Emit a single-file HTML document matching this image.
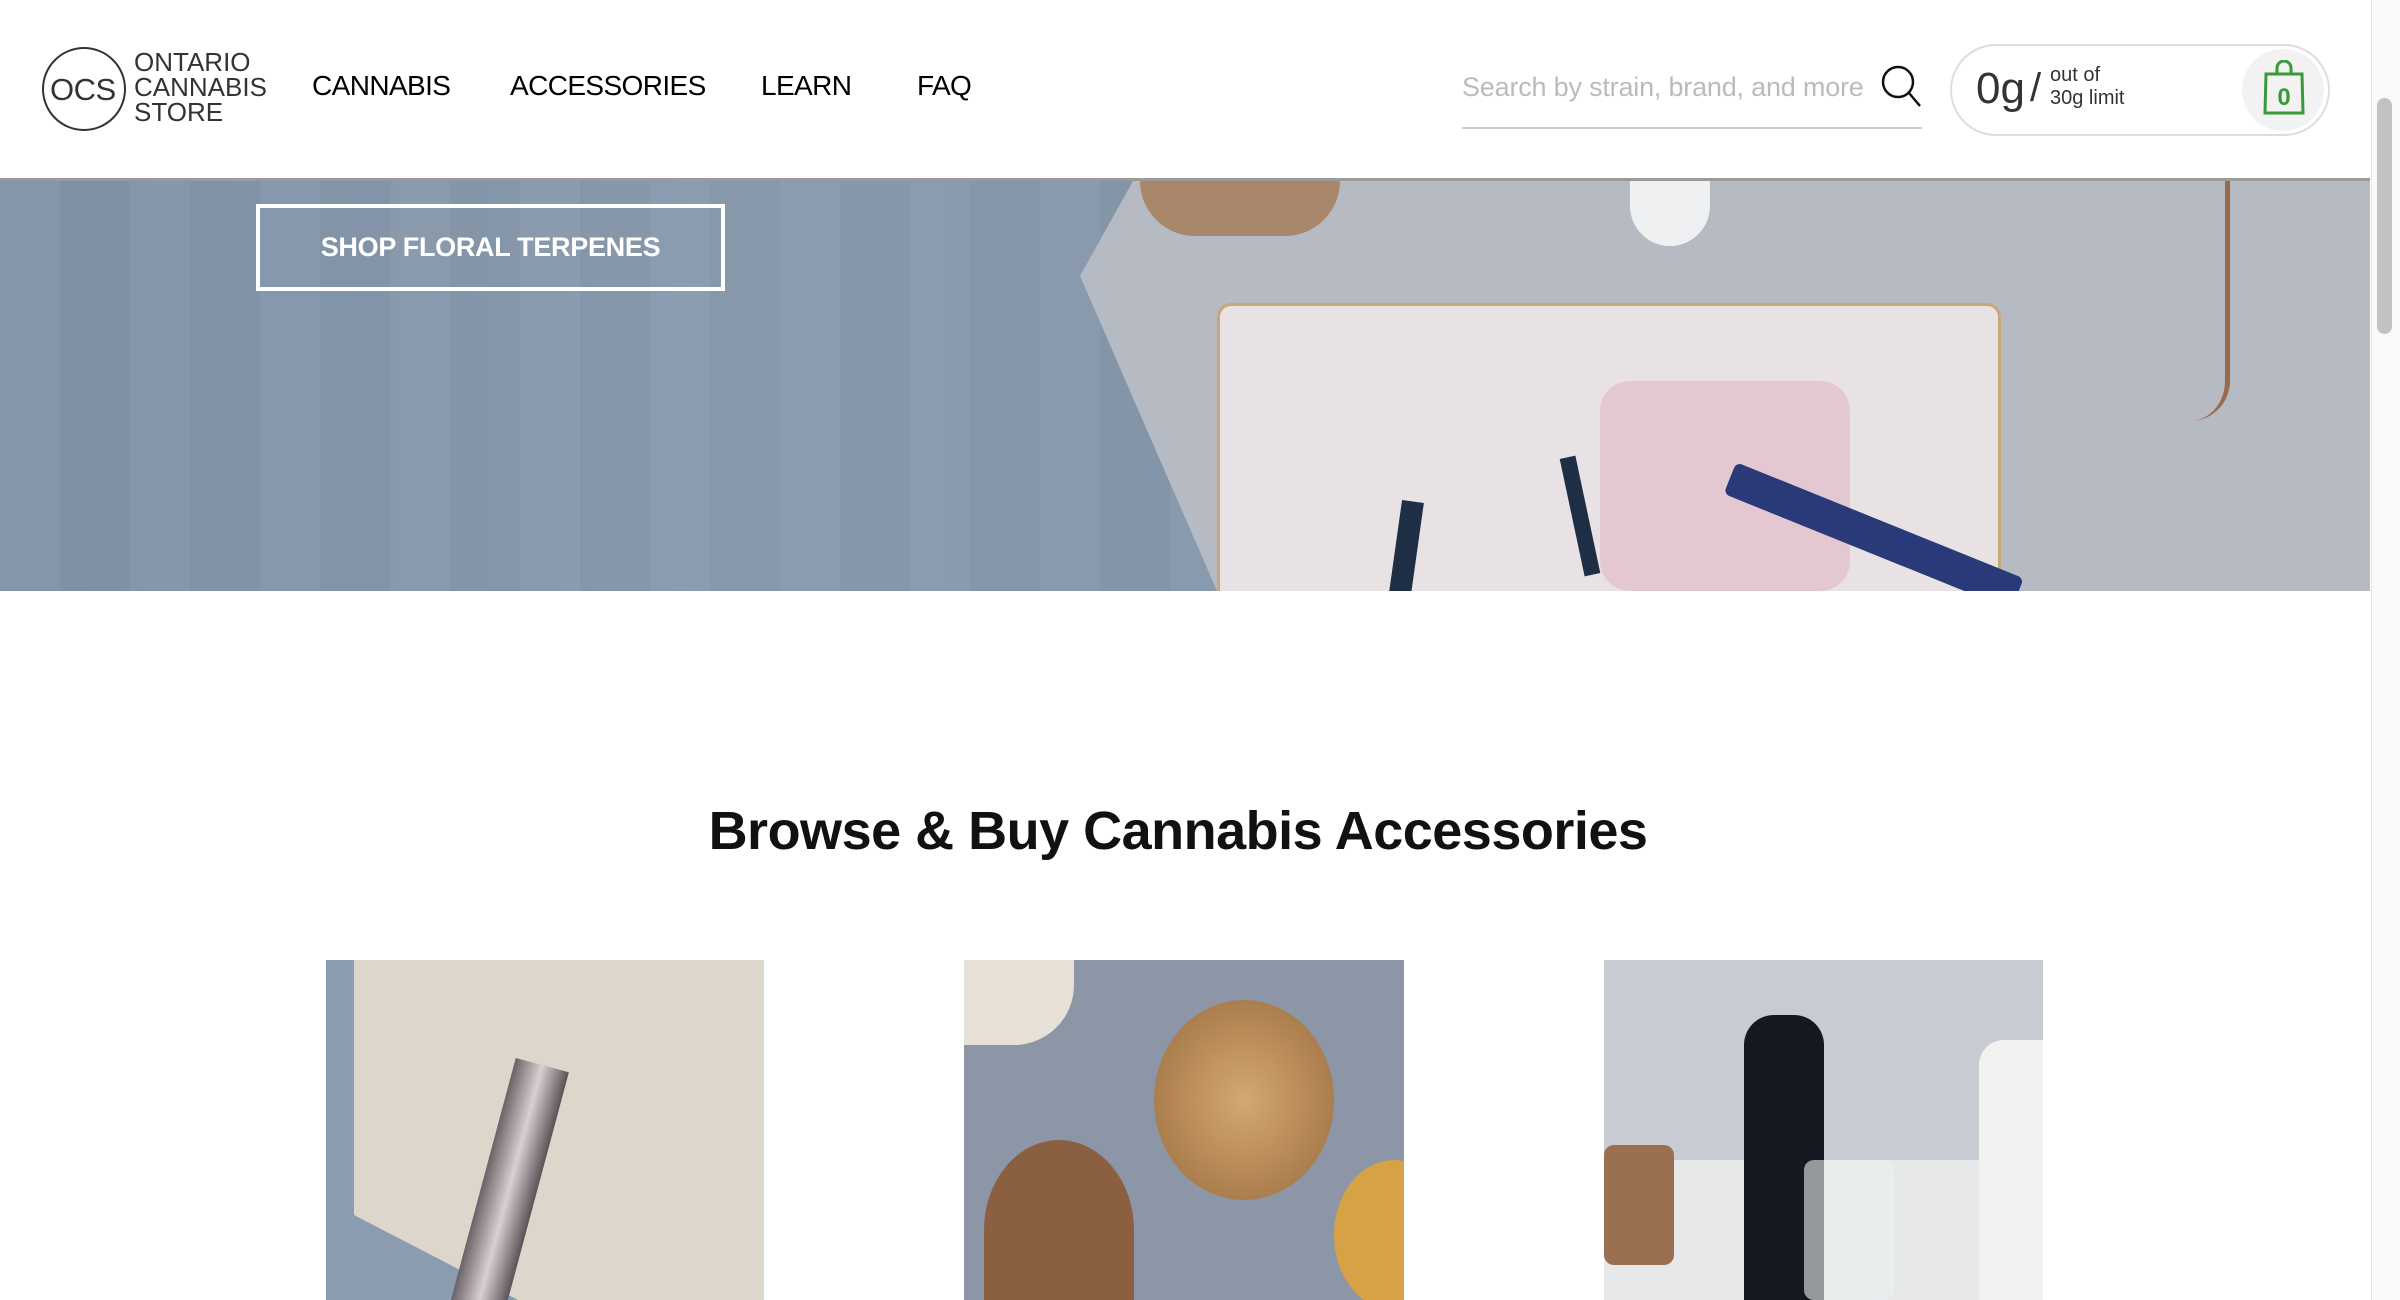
<!DOCTYPE html>
<html><head><meta charset="utf-8">
<style>
*{margin:0;padding:0;box-sizing:border-box}
body{width:2400px;height:1300px;overflow:hidden;background:#fff;font-family:"Liberation Sans",Arial,sans-serif;position:relative}
.abs{position:absolute}
.nav{position:absolute;top:70px;font-size:28px;color:#000;letter-spacing:-0.6px}
.logo-t{position:absolute;left:134px;font-size:26px;color:#333;line-height:25px;letter-spacing:0}
</style></head><body>
<div class="abs" style="left:0;top:0;width:2370px;height:178px;background:#fff"></div>
<div class="abs" style="left:0;top:178px;width:2370px;height:3px;background:#9a9a9a"></div>
<div class="abs" style="left:42px;top:47px;width:84px;height:84px;border:2px solid #333;border-radius:50%"></div>
<div class="abs" style="left:50px;top:72px;font-size:31px;color:#333;letter-spacing:-0.5px">OCS</div>
<div class="logo-t" style="top:50px">ONTARIO</div>
<div class="logo-t" style="top:75px">CANNABIS</div>
<div class="logo-t" style="top:100px">STORE</div>
<div class="nav" style="left:312px">CANNABIS</div>
<div class="nav" style="left:510px">ACCESSORIES</div>
<div class="nav" style="left:761px">LEARN</div>
<div class="nav" style="left:917px">FAQ</div>
<div class="abs" style="left:1462px;top:72px;font-size:27px;color:#bbb;letter-spacing:-0.2px">Search by strain, brand, and more</div>
<svg class="abs" style="left:1880px;top:64px" width="42" height="44" viewBox="0 0 42 44"><circle cx="18" cy="18" r="15" fill="none" stroke="#111" stroke-width="2.5"/><line x1="29" y1="29" x2="40" y2="42" stroke="#111" stroke-width="2.5"/></svg>
<div class="abs" style="left:1462px;top:127px;width:460px;height:2px;background:#ccc"></div>
<div class="abs" style="left:1950px;top:44px;width:380px;height:92px;border:2px solid #ddd;border-radius:46px"></div>
<div class="abs" style="left:1976px;top:64px;font-size:44px;color:#333;font-weight:300">0g</div>
<div class="abs" style="left:2030px;top:66px;font-size:40px;color:#333">/</div>
<div class="abs" style="left:2050px;top:64px;font-size:20px;color:#333;line-height:23px">out of<br>30g limit</div>
<div class="abs" style="left:2242px;top:49px;width:82px;height:82px;border-radius:50%;background:#f2f2f2"></div>
<svg class="abs" style="left:2262px;top:60px" width="44" height="56" viewBox="0 0 44 56"><path d="M15 14 V8 a7 7 0 0 1 14 0 V14" fill="none" stroke="#3a9a3a" stroke-width="3"/><path d="M4 14 H40 L41 53 H3 Z" fill="none" stroke="#3a9a3a" stroke-width="3"/><text x="22" y="45" text-anchor="middle" font-family="Liberation Sans" font-weight="bold" font-size="24" fill="#3a9a3a">0</text></svg>
<div class="abs" style="left:2371px;top:0;width:29px;height:1300px;background:#fafafa;border-left:1px solid #e6e6e6"></div>
<div class="abs" style="left:2377px;top:98px;width:15px;height:236px;background:#c2c2c2;border-radius:8px"></div>
<div class="abs" style="left:0;top:181px;width:2370px;height:410px;background:linear-gradient(90deg,#8193a7 0%,#8a9bae 30%,#8598ab 50%,#7f91a5 100%);overflow:hidden">
  <div class="abs" style="left:0;top:0;width:1250px;height:410px;background:repeating-linear-gradient(90deg,rgba(255,255,255,0.025) 0 60px,rgba(0,0,0,0.02) 60px 130px)"></div>
  <div class="abs" style="left:1080px;top:0;width:1290px;height:410px;background:#b6bac3;clip-path:polygon(53px 0,100% 0,100% 100%,137px 100%,0 95px)"></div>
  <div class="abs" style="left:1140px;top:0;width:200px;height:55px;background:#a8876a;border-radius:0 0 80px 80px"></div>
  <div class="abs" style="left:1630px;top:0;width:80px;height:65px;background:#eef0f2;border-radius:0 0 40px 40px"></div>
  <div class="abs" style="left:1217px;top:122px;width:784px;height:300px;background:#e9e2e5;border:3px solid #c9a878;border-radius:14px"></div>
  <div class="abs" style="left:1600px;top:200px;width:250px;height:210px;background:#e0b8c4;opacity:0.6;border-radius:30px"></div>
  <div class="abs" style="left:1730px;top:280px;width:310px;height:34px;background:#2a3a78;transform:rotate(22deg);transform-origin:left center;border-radius:6px"></div>
  <div class="abs" style="left:1572px;top:275px;width:16px;height:120px;background:#1e2e45;transform:rotate(-12deg)"></div>
  <div class="abs" style="left:1395px;top:320px;width:22px;height:100px;background:#1e2e45;transform:rotate(8deg)"></div>
  <div class="abs" style="left:2170px;top:0;width:60px;height:240px;border-right:5px solid #9a6a4a;border-radius:0 0 40px 0"></div>
</div>
<div class="abs" style="left:256px;top:204px;width:469px;height:87px;border:4px solid #fff"></div>
<div class="abs" style="left:256px;top:232px;width:469px;text-align:center;font-size:27px;font-weight:bold;color:#fff;letter-spacing:-0.3px">SHOP FLORAL TERPENES</div>
<div class="abs" style="left:0;top:800px;width:2356px;text-align:center;font-size:54px;font-weight:bold;color:#111;letter-spacing:-0.5px">Browse &amp; Buy Cannabis Accessories</div>
<div class="abs" style="left:326px;top:960px;width:438px;height:340px;background:#8c9cb0;overflow:hidden">
  <div class="abs" style="left:28px;top:0;width:410px;height:340px;background:#ddd6ca;clip-path:polygon(0 0,100% 0,100% 100%,40% 100%,0 75%)"></div>
  <div class="abs" style="left:150px;top:100px;width:55px;height:300px;background:linear-gradient(90deg,#6a6266,#d8d0d2,#5a5256);transform:rotate(15deg)"></div>
</div>
<div class="abs" style="left:964px;top:960px;width:440px;height:340px;background:#8c96a6;overflow:hidden">
  <div class="abs" style="left:0;top:0;width:110px;height:85px;background:#e6e0d6;border-radius:0 0 60px 0"></div>
  <div class="abs" style="left:190px;top:40px;width:180px;height:200px;background:radial-gradient(#d4a870,#9a6c40);border-radius:50%"></div>
  <div class="abs" style="left:20px;top:180px;width:150px;height:180px;background:#8a6040;border-radius:50% 50% 10px 10px"></div>
  <div class="abs" style="left:370px;top:200px;width:120px;height:150px;background:#d7a145;border-radius:50%"></div>
</div>
<div class="abs" style="left:1604px;top:960px;width:439px;height:340px;background:#c8ccd2;overflow:hidden">
  <div class="abs" style="left:0;top:200px;width:439px;height:140px;background:#e6e8ea"></div>
  <div class="abs" style="left:140px;top:55px;width:80px;height:285px;background:#151820;border-radius:30px 30px 0 0"></div>
  <div class="abs" style="left:0;top:185px;width:70px;height:120px;background:#9a7050;border-radius:10px"></div>
  <div class="abs" style="left:375px;top:80px;width:64px;height:260px;background:#f2f2f0;border-radius:25px 0 0 0"></div>
  <div class="abs" style="left:200px;top:200px;width:90px;height:140px;background:rgba(235,240,240,0.6);border-radius:10px"></div>
</div>
</body></html>
